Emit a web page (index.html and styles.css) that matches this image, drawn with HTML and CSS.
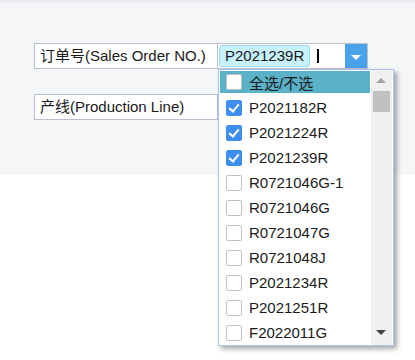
FILE: index.html
```html
<!DOCTYPE html>
<html>
<head>
<meta charset="utf-8">
<link rel="stylesheet" href="styles.css">
</head>
<body>
<div class="page">
  <div class="panel">
    <div class="form-row first">
      <div class="label">订单号(Sales Order NO.)</div>
      <div class="combo">
        <span class="tag">P2021239R</span>
        <span class="caret"></span>
        <span class="btn"><span class="tri"></span></span>
      </div>
    </div>
    <div class="form-row second">
      <div class="label">产线(Production Line)</div>
    </div>
  </div>
  <div class="dropdown">
    <div class="list">
      <div class="item head"><span class="cb"></span>全选/不选</div>
      <div class="item"><span class="cb on"></span>P2021182R</div>
      <div class="item"><span class="cb on"></span>P2021224R</div>
      <div class="item"><span class="cb on"></span>P2021239R</div>
      <div class="item"><span class="cb"></span>R0721046G-1</div>
      <div class="item"><span class="cb"></span>R0721046G</div>
      <div class="item"><span class="cb"></span>R0721047G</div>
      <div class="item"><span class="cb"></span>R0721048J</div>
      <div class="item"><span class="cb"></span>P2021234R</div>
      <div class="item"><span class="cb"></span>P2021251R</div>
      <div class="item"><span class="cb"></span>F2022011G</div>
    </div>
    <div class="scroll">
      <span class="arr up"></span>
      <span class="thumb"></span>
      <span class="arr down"></span>
    </div>
  </div>
</div>
</body>
</html>
```
FILE: styles.css
```css
html, body { margin: 0; padding: 0; background: #fff; }
body { font-family: "Liberation Sans", "Noto Sans CJK SC", sans-serif; font-size: 15px; color: #1a1a1a; }
.page { position: relative; min-height: 360px; }
.panel {
  background: #f5f6f8;
  border-top: 3px solid #ebecef;
  padding: 40px 0 0 34px;
  box-sizing: border-box;
  height: 175px;
}
.form-row { display: flex; height: 26px; }
.form-row.second { margin-top: 25px; }
.label {
  width: 184px; height: 26px; box-sizing: border-box;
  border: 1px solid #b9bfd2; background: #fff;
  padding-left: 5px; line-height: 24px; white-space: nowrap;
}
.combo {
  width: 150px; height: 26px; box-sizing: border-box;
  border: 1px solid #bcc2cc; border-left: none; background: #fff;
  display: flex; align-items: center;
}
.tag {
  height: 22px; box-sizing: border-box; margin-left: 1px;
  border: 1px solid #9fd8ee; border-radius: 3px; background: #c7f1fb;
  padding: 0 5px; line-height: 20px;
}
.caret { width: 2px; height: 14px; background: #000; margin-left: 7px; }
.btn {
  margin-left: auto; width: 22px; height: 24px; background: #4aa2ec;
  display: flex; align-items: center; justify-content: center;
}
.tri { width: 0; height: 0; border-left: 5px solid transparent; border-right: 5px solid transparent; border-top: 5px solid #fff; margin-top: 2px; }
.dropdown {
  position: absolute; left: 218px; top: 69px;
  width: 176px; height: 277px; box-sizing: border-box;
  border: 1px solid #a7c5ef; background: #fff;
  box-shadow: 3px 3px 5px rgba(0,0,0,0.35);
  display: flex;
}
.list { flex: 1; padding-top: 1px; }
.item { height: 25px; display: flex; align-items: center; padding-left: 7px; white-space: nowrap; }
.item.head { height: 22px; margin: 0 1px 2px 1px; padding-left: 6px; background: #5ab1c8; }
.cb {
  width: 16px; height: 16px; box-sizing: border-box; margin-right: 7px;
  border: 1px solid #c3c3c3; border-radius: 2px; background: #fff; position: relative;
}
.cb.on { background: #3e8ef0; border-color: #3e8ef0; }
.cb.on::after {
  content: ""; position: absolute; left: 4px; top: 1px; width: 4px; height: 8px;
  border: solid #fff; border-width: 0 2px 2px 0; transform: rotate(40deg);
}
.scroll { width: 21px; background: #f0f0f0; position: relative; margin-right: 1px; }
.thumb { position: absolute; left: 2px; top: 21px; width: 17px; height: 21px; background: #c1c1c1; }
.arr { position: absolute; left: 5px; width: 0; height: 0; border-left: 5px solid transparent; border-right: 5px solid transparent; }
.arr.up { top: 8px; border-bottom: 5px solid #a3a3a3; }
.arr.down { bottom: 10px; border-top: 5px solid #444; }
```
